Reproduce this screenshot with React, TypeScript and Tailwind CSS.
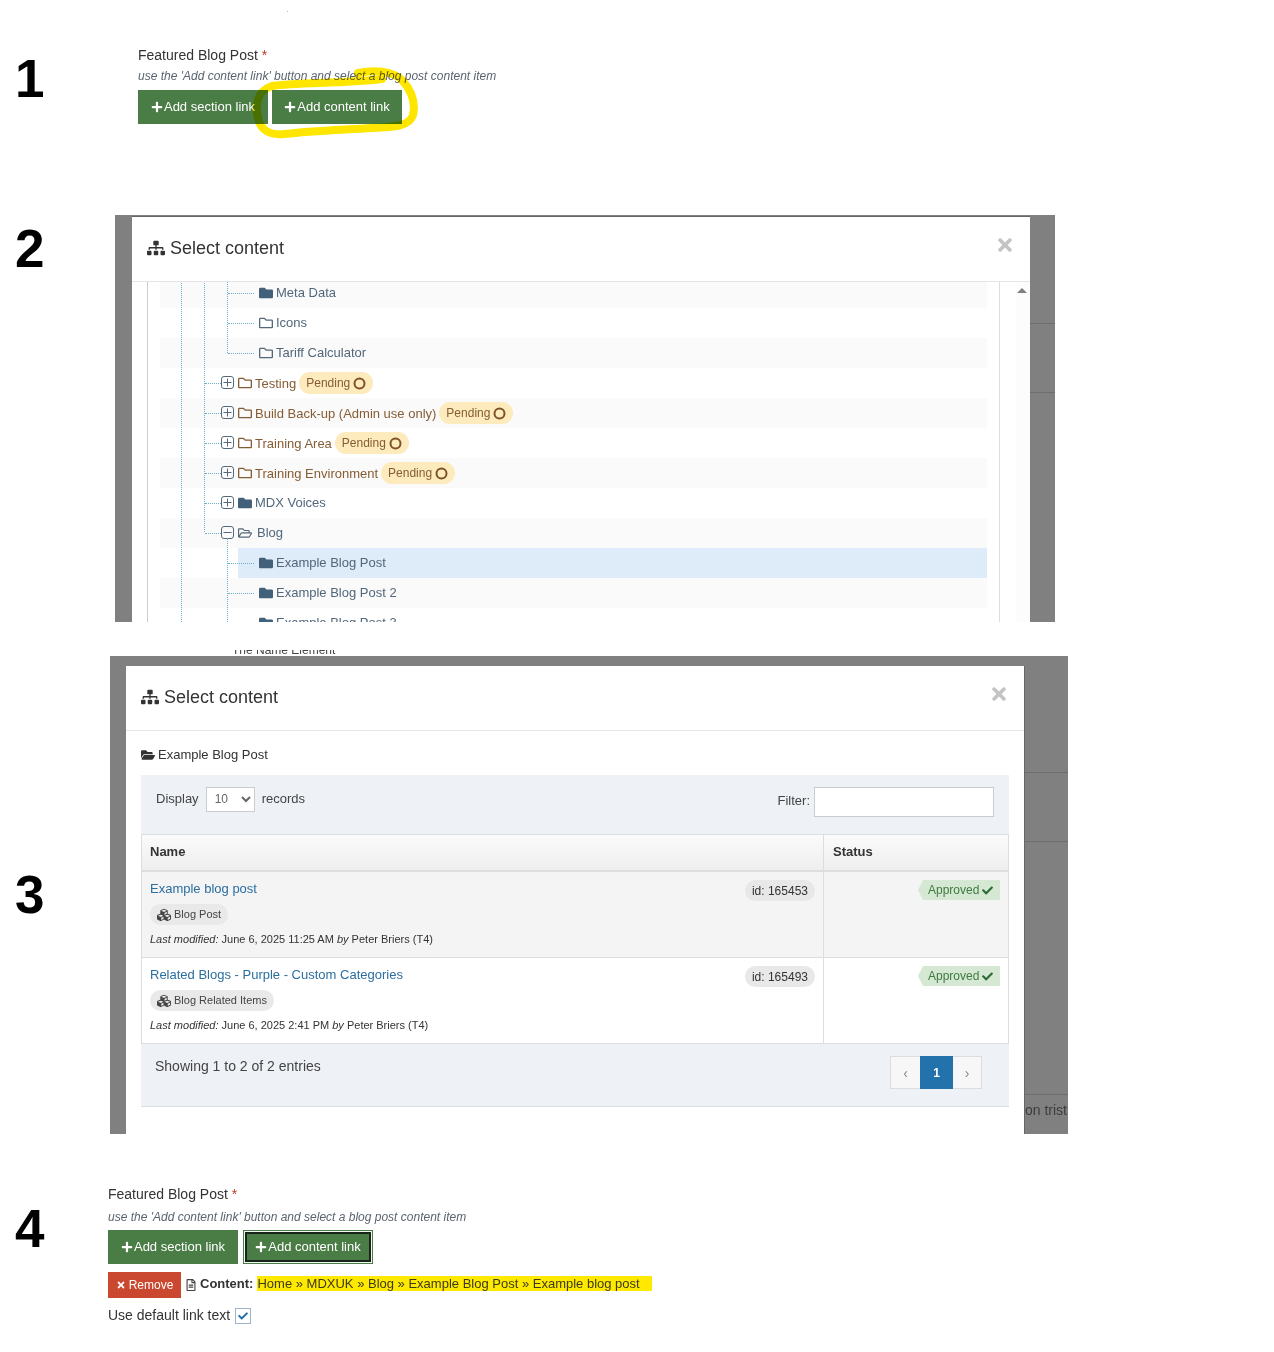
import React from "react";
import {
  FaSitemap, FaFolder, FaRegFolder, FaRegFolderOpen, FaFolderOpen, FaPlus, FaTimes, FaCheck, FaCubes, FaRegFileAlt,
} from "react-icons/fa";

const Num = ({ n, w, top }: { n: string; w: string; top: string }) => (
  <div className={`${w} ${top} shrink-0 pl-[15px] font-bold text-[53px] leading-none text-black`}>{n}</div>
);

const Plus = ({ minus }: { minus?: boolean }) => (
  <svg width="13" height="13" viewBox="0 0 13 13" fill="none" stroke="#55697a" strokeWidth="1" className="shrink-0 -mt-[2px]">
    <rect x="0.5" y="0.5" width="12" height="12" rx="2.5" />
    <path d={minus ? "M2.5 6.5h8" : "M2.5 6.5h8M6.5 2.5v8"} />
  </svg>
);

const Ring = () => (
  <svg width="13" height="13" viewBox="0 0 13 13" fill="none" stroke="#7d5226" strokeWidth="2" className="shrink-0 ml-[3px]">
    <circle cx="6.5" cy="6.5" r="5" />
  </svg>
);

type RowProps = {
  label: string;
  striped?: boolean;
  selected?: boolean;
  kind: "leaf" | "node";
  icon: "solid" | "open" | "reg";
  open?: boolean;
  pending?: boolean;
};

const TreeRow = ({ label, striped, selected, kind, icon, open, pending }: RowProps) => {
  const color = pending ? "text-[#855c33]" : "text-[#52677a]";
  const Icon = icon === "solid" ? FaFolder : icon === "open" ? FaRegFolderOpen : FaRegFolder;
  return (
    <div
      className={`h-[30px] flex items-center ${kind === "leaf" ? "pl-[68px]" : "pl-[45px]"} ${
        selected ? "bg-[linear-gradient(90deg,transparent_78px,#deebf9_78px)]" : striped ? "bg-[#fafafa]" : "bg-white"
      } ${color}`}
    >
      {kind === "leaf" ? (
        <span className="w-[26px] border-t border-dotted border-[#6aaed0] mr-[5px] shrink-0" />
      ) : (
        <>
          <span className="w-[16px] border-t border-dotted border-[#6aaed0] shrink-0" />
          <Plus minus={open} />
          <span className="w-[4px] shrink-0" />
        </>
      )}
      <Icon size={14} className={`shrink-0 -mt-[1px] ${icon === "solid" ? "text-[#42607a]" : pending ? "text-[#855c33]" : "text-[#52677a]"}`} />
      <span className={`${icon === "open" ? "ml-[5px]" : "ml-[3px]"} ${pending ? "pt-[2px]" : ""} text-[13px] whitespace-nowrap`}>{label}</span>
      {pending && (
        <span className="ml-[3px] h-[22px] px-[7px] rounded-full bg-[#fdebbd] text-[12px] text-[#855c33] flex items-center">
          Pending
          <Ring />
        </span>
      )}
    </div>
  );
};

const Btn = ({ label, focus }: { label: string; focus?: boolean }) => (
  <button
    className={`h-[34px] w-[130px] justify-center bg-[#4a7c45] text-white text-[13px] flex items-center whitespace-nowrap ${
      focus ? "shadow-[inset_0_0_0_1px_#4a7c45,inset_0_0_0_2px_#f4f8f2,inset_0_0_0_4px_#18241a]" : ""
    }`}
  >
    <FaPlus size={12} className="mr-[1px]" />
    {label}
  </button>
);

const Head = () => (
  <div className="h-[65px] border-b border-[#e5e5e5] pl-[15px] pr-[15px] pb-[2px] flex items-center justify-between shrink-0">
    <div className="flex items-center text-[18px] text-[#333]">
      <FaSitemap size={18} className="mr-[5px]" />
      Select content
    </div>
    <FaTimes size={20} className="text-[#c4c4c4] -mt-[6px]" />
  </div>
);

const FieldHead = ({ gap }: { gap: string }) => (
  <>
    <div className="text-[14px] leading-[20px] text-[#333]">
      Featured Blog Post <span className="text-[#c0392b]">*</span>
    </div>
    <div className={`${gap} text-[12px] leading-[18px] italic text-[#5b6470] whitespace-nowrap`}>
      use the 'Add content link' button and select a blog post content item
    </div>
  </>
);

const Result = ({ odd, name, id, type, date }: { odd?: boolean; name: string; id: string; type: string; date: string }) => (
  <div className={`flex h-[86px] border-b border-[#dddddd] ${odd ? "bg-[#f4f4f4]" : "bg-white"}`}>
    <div className="w-[682px] shrink-0 border-r border-[#dddddd] pl-[8px] pr-[8px] pt-[8px]">
      <div className="flex justify-between items-start">
        <a className="text-[#2b6f9f] text-[13px] leading-[18px]">{name}</a>
        <span className="h-[21px] px-[7px] rounded-full bg-[#e8e8e8] text-[12px] text-[#333] flex items-center">{id}</span>
      </div>
      <div className="mt-[3px]">
        <span className="inline-flex items-center h-[21px] px-[7px] rounded-full bg-[#e9e9e9] text-[11px] text-[#444]">
          <FaCubes size={14} className="mr-[3px]" />
          {type}
        </span>
      </div>
      <div className="mt-[3px] text-[11px] leading-[14px] text-[#333] whitespace-nowrap">
        <i>Last modified:</i> {date} <i>by</i> Peter Briers (T4)
      </div>
    </div>
    <div className="flex-1 pr-[8px] pt-[8px] flex justify-end items-start">
      <span className="h-[20px] w-[82px] pl-[10px] bg-[#d5e8d4] text-[12px] text-[#3f7a3f] flex items-center [clip-path:polygon(5px_0,100%_0,100%_100%,5px_100%,0_50%)]">
        Approved
        <FaCheck size={11} className="ml-[3px] text-[#2f6b35]" />
      </span>
    </div>
  </div>
);

export default function App() {
  return (
    <div className="relative w-[1274px] h-[1352px] bg-white overflow-hidden font-['Liberation_Sans',Arial,sans-serif] text-[#333]">
      <span className="absolute left-[287px] top-[11px] w-px h-px bg-[#bbb]" />

      {/* Step 1 */}
      <div className="h-[215px] flex">
        <Num n="1" w="w-[138px]" top="pt-[52px]" />
        <div className="pt-[45px] relative">
          <FieldHead gap="mt-[2px]" />
          <div className="mt-[5px] flex gap-[4px]">
            <Btn label="Add section link" />
            <div className="w-[131px] flex"><Btn label="Add content link" /></div>
          </div>
        </div>
      </div>

      {/* Step 2 */}
      <div className="h-[407px] flex">
        <Num n="2" w="w-[115px]" top="pt-[7px]" />
        <div className="w-[940px] h-full bg-[#808080] flex pl-[17px] pt-[1px]">
          <div className="w-[898px] h-full bg-white border-t border-[#666] flex flex-col">
            <Head />
            <div className="flex-1 relative overflow-hidden">
              <div className="absolute left-[15px] top-0 bottom-0 border-l border-[#c8ced6]" />
              <div className="absolute left-[867px] top-0 bottom-0 border-l border-[#dddddd]" />
              <div className="absolute right-0 top-0 bottom-0 w-[14px] bg-[#fcfcfc]" />
              <div className="absolute right-[3px] top-[6px] w-0 h-0 border-x-[5px] border-x-transparent border-b-[5px] border-b-[#808080]" />
              <div className="ml-[28px] w-[827px] -mt-[4px] relative">
                <div className="absolute left-[21px] top-0 h-[400px] border-l border-dotted border-[#6aaed0]" />
                <div className="absolute left-[44px] top-0 h-[254px] border-l border-dotted border-[#6aaed0]" />
                <div className="absolute left-[67px] top-0 h-[75px] border-l border-dotted border-[#6aaed0]" />
                <div className="absolute left-[67px] top-[260px] h-[140px] border-l border-dotted border-[#6aaed0]" />
                <TreeRow kind="leaf" icon="solid" label="Meta Data" striped />
                <TreeRow kind="leaf" icon="reg" label="Icons" />
                <TreeRow kind="leaf" icon="reg" label="Tariff Calculator" striped />
                <TreeRow kind="node" icon="reg" label="Testing" pending />
                <TreeRow kind="node" icon="reg" label="Build Back-up (Admin use only)" pending striped />
                <TreeRow kind="node" icon="reg" label="Training Area" pending />
                <TreeRow kind="node" icon="reg" label="Training Environment" pending striped />
                <TreeRow kind="node" icon="solid" label="MDX Voices" />
                <TreeRow kind="node" icon="open" open label="Blog" striped />
                <TreeRow kind="leaf" icon="solid" label="Example Blog Post" selected />
                <TreeRow kind="leaf" icon="solid" label="Example Blog Post 2" striped />
                <TreeRow kind="leaf" icon="solid" label="Example Blog Post 3" />
              </div>
            </div>
          </div>
          <div className="flex-1 flex flex-col">
            <div className="h-[108px] border-b border-[#6e6e6e]" />
            <div className="h-[69px] border-b border-[#6e6e6e]" />
          </div>
        </div>
      </div>

      {/* Step 3 */}
      <div className="h-[34px] pl-[232px] pt-[28px] overflow-hidden">
        <div className="h-[6px] overflow-hidden"><div className="text-[12px] leading-[13px] -mt-[6px] text-[#444]">The Name Element</div></div>
      </div>
      <div className="h-[478px] flex">
        <Num n="3" w="w-[110px]" top="pt-[212px]" />
        <div className="w-[958px] h-full bg-[#808080] flex pl-[16px] pt-[10px]">
          <div className="w-[898px] h-full bg-white flex flex-col">
            <Head />
            <div className="pl-[15px] pr-[15px] flex flex-col flex-1">
              <div className="h-[44px] pt-[4px] flex items-center text-[13px] text-[#333]">
                <FaFolderOpen size={14} className="mr-[3px]" />
                Example Blog Post
              </div>
              <div className="w-[868px] h-[332px] bg-[#eef1f6] border-b border-[#dddddd] flex flex-col">
                <div className="h-[59px] flex items-start justify-between pl-[15px] pr-[15px] pt-[12px] shrink-0 text-[13px] text-[#444]">
                  <div className="flex items-center h-[24px]">
                    Display
                    <select defaultValue="10" className="ml-[7px] mr-[7px] w-[49px] h-[25px] bg-white border border-[#ccc] text-[12px] text-[#666] pl-[4px]">
                      <option>10</option>
                    </select>
                    records
                  </div>
                  <div className="flex items-center">
                    <span className="-mt-[2px]">Filter:</span>
                    <span className="ml-[4px] w-[180px] h-[30px] bg-white border border-[#ccc] block" />
                  </div>
                </div>
                <div className="border-x border-t border-[#dddddd]">
                  <div className="flex h-[37px] border-b-2 border-[#dddddd] bg-[linear-gradient(#fbfbfb,#eeeeee)] font-bold text-[13px] text-[#333]">
                    <div className="w-[682px] shrink-0 border-r border-[#dddddd] pl-[8px] pb-[2px] flex items-center">Name</div>
                    <div className="flex-1 pl-[9px] pb-[2px] flex items-center">Status</div>
                  </div>
                  <Result odd name="Example blog post" id="id: 165453" type="Blog Post" date="June 6, 2025 11:25 AM" />
                  <Result name="Related Blogs - Purple - Custom Categories" id="id: 165493" type="Blog Related Items" date="June 6, 2025 2:41 PM" />
                </div>
                <div className="flex justify-between pl-[14px] pr-[27px] pt-[12px] text-[14px] text-[#444]">
                  <div className="leading-[20px]">Showing 1 to 2 of 2 entries</div>
                  <div className="flex h-[33px] border border-[#dddddd] bg-[#f7f7f7] text-[#888] text-[14px] leading-none">
                    <span className="w-[29px] flex items-center justify-center">‹</span>
                    <span className="w-[33px] flex items-center justify-center bg-[#2472ab] text-white font-bold text-[12px] -my-px">1</span>
                    <span className="w-[28px] flex items-center justify-center">›</span>
                  </div>
                </div>
              </div>
            </div>
          </div>
          <div className="flex-1 flex flex-col border-l border-[#666] overflow-hidden">
            <div className="h-[107px] border-b border-[#6e6e6e]" />
            <div className="h-[69px] border-b border-[#6e6e6e]" />
            <div className="h-[253px] border-b border-[#6e6e6e]" />
            <div className="pt-[6px] text-[14px] leading-[18px] text-[#3c3c3c] whitespace-nowrap">on tristique</div>
          </div>
        </div>
      </div>

      {/* Step 4 */}
      <div className="flex">
        <Num n="4" w="w-[108px]" top="pt-[68px]" />
        <div className="pt-[50px]">
          <FieldHead gap="mt-[4px]" />
          <div className="mt-[4px] flex gap-[5px]">
            <Btn label="Add section link" />
            <Btn label="Add content link" focus />
          </div>
          <div className="mt-[8px] flex items-center h-[26px]">
            <span className="h-[26px] w-[73px] justify-center bg-[#c9482f] text-white text-[12px] flex items-center">
              <FaTimes size={10} className="mr-[3px]" />
              Remove
            </span>
            <FaRegFileAlt size={12} className="ml-[4px] mr-[3px] text-[#444]" />
            <b className="text-[13px] text-[#333] mr-[4px] -mt-[2px]">Content:</b>
            <span className="text-[13px] leading-[15px] -mt-[4px] text-[#3a3a1a] bg-[#ffe900] pr-[12px] whitespace-nowrap">
              Home » MDXUK » Blog » Example Blog Post » Example blog post
            </span>
          </div>
          <div className="mt-[7px] flex items-center text-[14px] text-[#333]">
            Use default link text
            <span className="ml-[5px] w-[16px] h-[16px] border border-[#9db4cc] flex items-center justify-center">
              <FaCheck size={10} className="text-[#2472ab]" />
            </span>
          </div>
        </div>
      </div>

      <svg className="absolute left-[240px] top-[60px] mix-blend-multiply pointer-events-none" width="190" height="90" viewBox="240 60 190 90" fill="none">
        <path
          d="M358 73C372 70 392 70 402 80C411 90 416 102 413 115C410 126 395 127 372 128C340 130 310 131 285 134C267 136 258 128 257 112C256 98 260 90 272 86C300 82 340 84 382 79"
          stroke="#ffe600"
          strokeWidth="8"
          strokeLinecap="round"
          strokeLinejoin="round"
        />
      </svg>
    </div>
  );
}
